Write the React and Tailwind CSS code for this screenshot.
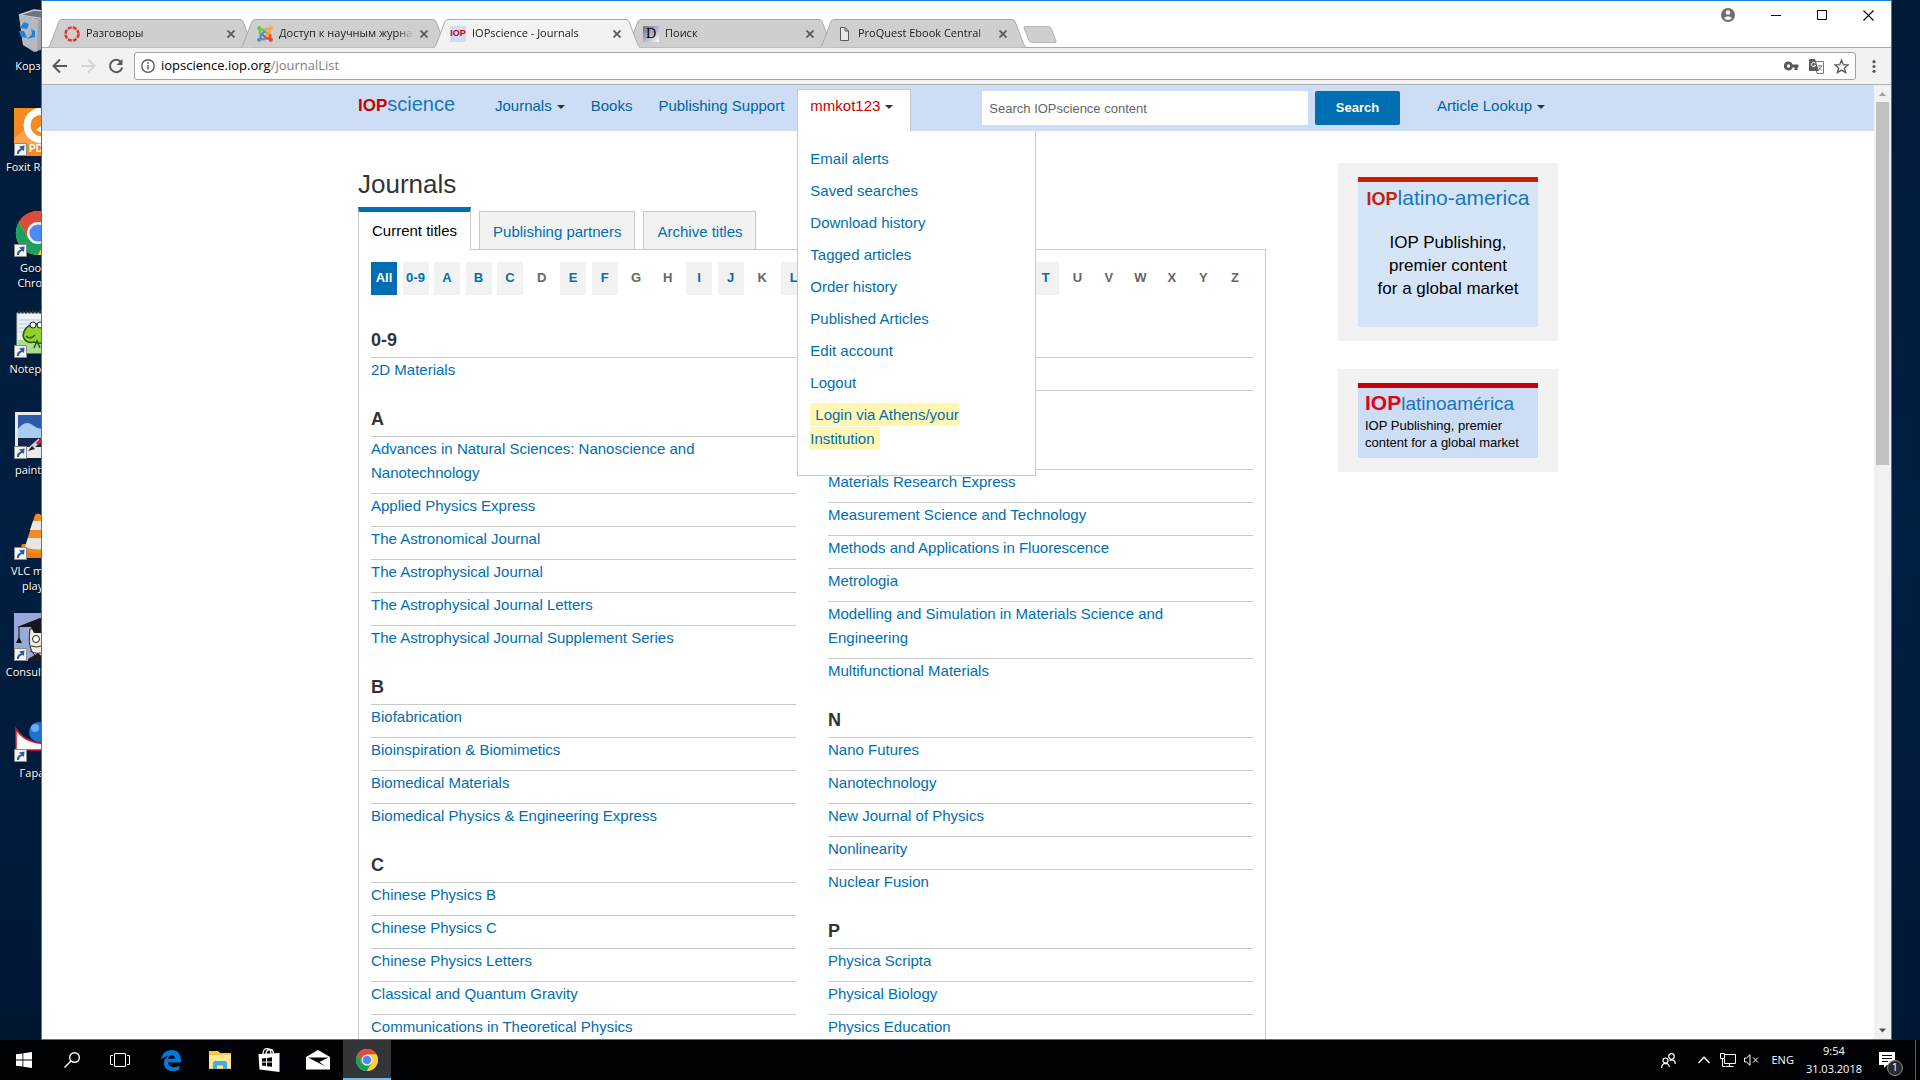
import React from 'react'

const desktopItems = [
  { label: 'Корзина', icon: 'bin' },
  { label: 'Foxit Reader', icon: 'foxit', shortcut: true },
  { label: 'Google Chrome', icon: 'chrome', shortcut: true },
  { label: 'Notepad++', icon: 'notepad', shortcut: true },
  { label: 'paint.net', icon: 'paint', shortcut: true },
  { label: 'VLC media player', icon: 'vlc', shortcut: true },
  { label: 'Consultant...', icon: 'consultant', shortcut: true },
  { label: 'Гарант', icon: 'garant', shortcut: true },
]

const browserTabs = [
  { title: 'Разговоры', icon: 'ring' },
  { title: 'Доступ к научным журналам', icon: 'joomla' },
  { title: 'IOPscience - Journals', icon: 'iop', active: true },
  { title: 'Поиск', icon: 'letter' },
  { title: 'ProQuest Ebook Central', icon: 'page' },
]

const accountLinks = [
  'Email alerts',
  'Saved searches',
  'Download history',
  'Tagged articles',
  'Order history',
  'Published Articles',
  'Edit account',
  'Logout',
]

const letters = ['All', '0-9', ...'ABCDEFGHIJKLMNOPQRSTUVWXYZ']
const emptyLetters = 'DGHKOUVWXYZ'

const leftColumn = [
  { letter: '0-9', titles: ['2D Materials'] },
  {
    letter: 'A',
    titles: [
      'Advances in Natural Sciences: Nanoscience and Nanotechnology',
      'Applied Physics Express',
      'The Astronomical Journal',
      'The Astrophysical Journal',
      'The Astrophysical Journal Letters',
      'The Astrophysical Journal Supplement Series',
    ],
  },
  {
    letter: 'B',
    titles: [
      'Biofabrication',
      'Bioinspiration & Biomimetics',
      'Biomedical Materials',
      'Biomedical Physics & Engineering Express',
    ],
  },
  {
    letter: 'C',
    titles: [
      'Chinese Physics B',
      'Chinese Physics C',
      'Chinese Physics Letters',
      'Classical and Quantum Gravity',
      'Communications in Theoretical Physics',
    ],
  },
]

const rightColumn = [
  { letter: 'L', titles: ['Laser Physics', 'Laser Physics Letters'] },
  {
    letter: 'M',
    titles: [
      'Materials Research Express',
      'Measurement Science and Technology',
      'Methods and Applications in Fluorescence',
      'Metrologia',
      'Modelling and Simulation in Materials Science and Engineering',
      'Multifunctional Materials',
    ],
  },
  {
    letter: 'N',
    titles: ['Nano Futures', 'Nanotechnology', 'New Journal of Physics', 'Nonlinearity', 'Nuclear Fusion'],
  },
  { letter: 'P', titles: ['Physica Scripta', 'Physical Biology', 'Physics Education'] },
]

const ChromeLogo = ({ className }) => (
  <svg viewBox="0 0 48 48" className={className}>
    <circle cx="24" cy="24" r="22" fill="#fbc62f" />
    <path d="M24 13 H43 A22 22 0 0 0 4.9 13 L15 30 Z" fill="#dd4b3e" />
    <path d="M4.9 13 A22 22 0 0 0 24 46 L33.5 29.5 L24 34 L14.5 29.5 Z" fill="#1aa15f" />
    <path d="M43 13 H24 L33.5 29.5 L24 46 A22 22 0 0 0 43 13 Z" fill="#fccd3c" />
    <circle cx="24" cy="24" r="11" fill="#f4f4f4" />
    <circle cx="24" cy="24" r="8.6" fill="#4c8bf5" />
  </svg>
)

const DesktopIcon = ({ name }) => {
  if (name === 'bin')
    return (
      <svg viewBox="0 0 48 48" className="size-12">
        <path d="M5 8 L20 3 L46 6 L30 12 Z" fill="#6d757c" stroke="#c9ced2" strokeWidth="1.5" />
        <path d="M5 8 L24 12 L46 6 L41 38 L20 45 L9 38 Z" fill="#9da4ab" />
        <path d="M5 8 L24 12 L23 45 L9 38 Z" fill="#b4bac0" />
        <path d="M6 21 l4-6 5 2-2 5z M5 24 l5 0 3 7-6-1z M13 32 l5-5-1-5 4 2 0 6z" fill="#1c82dc" />
      </svg>
    )
  if (name === 'foxit')
    return (
      <svg viewBox="0 0 48 48" className="size-12">
        <path d="M0 0 H48 V48 H0 Z" fill="#f58a1f" />
        <path d="M0 31 L14 18 L26 30 V36 H0 Z" fill="#f9a34c" />
        <path d="M32 5 A13 14 0 1 0 32 30" fill="none" stroke="#fff" strokeWidth="7" />
        <path d="M22 22 l6-5 v8z" fill="#fff" />
        <text x="15" y="44" fill="#fff" fontSize="10" fontWeight="700" fontFamily="Liberation Sans, sans-serif">PDF</text>
      </svg>
    )
  if (name === 'chrome') return <ChromeLogo className="size-12" />
  if (name === 'notepad')
    return (
      <svg viewBox="0 0 48 48" className="size-12">
        <path d="M3 3 H46 V43 H3 Z" fill="#eef3f8" stroke="#b8c2cc" />
        <path d="M4 2 H46" stroke="#333" strokeWidth="3" strokeDasharray="2 1.5" />
        <path d="M5 10 H45 M5 14 H45 M5 18 H45 M5 22 H45" stroke="#a7c8e6" />
        <path d="M4 30 H45 V43 H4 Z" fill="#a8e08c" />
        <path d="M9 26 Q10 15 22 14 Q38 14 36 28 Q30 36 20 32 Q11 34 9 26 Z" fill="#8ed22f" stroke="#2f5511" strokeWidth="1.5" />
        <circle cx="19" cy="15" r="3" fill="#fff" stroke="#222" />
        <circle cx="26" cy="15" r="3" fill="#fff" stroke="#222" />
        <path d="M12 26 q4 4 9-1 M20 38 l3-7 3 7" fill="none" stroke="#2f5511" strokeWidth="1.5" />
      </svg>
    )
  if (name === 'paint')
    return (
      <svg viewBox="0 0 48 48" className="size-12">
        <path d="M1 1 H47 V47 H1 Z" fill="#e9e9e9" />
        <path d="M4 4 H44 V36 H4 Z" fill="#2a5caa" />
        <path d="M4 18 Q12 8 20 15 T44 12 V27 H4 Z" fill="#a9cdf0" />
        <path d="M4 27 H44 V36 H4 Z" fill="#12294f" />
        <path d="M17 37 L26 29" stroke="#cfd3d8" strokeWidth="4" />
        <path d="M23 33 L40 16" stroke="#cf2027" strokeWidth="3" />
        <path d="M14 40 l4-5 3 3z" fill="#222" />
      </svg>
    )
  if (name === 'vlc')
    return (
      <svg viewBox="0 0 48 48" className="size-12">
        <path d="M8 32 H42 L47 46 H4 Z" fill="#ef7d0f" />
        <path d="M21 3 Q24 0 27 3 L38 38 Q24 45 10 38 Z" fill="#f58a1f" />
        <path d="M19 9 H29 L32 18 H16 Z" fill="#e6e6e6" />
        <path d="M14 26 H34 L37 35 Q24 40 11 35 Z" fill="#e6e6e6" />
      </svg>
    )
  if (name === 'consultant')
    return (
      <svg viewBox="0 0 48 48" className="size-12">
        <path d="M0 0 H48 V48 H0 Z" fill="#98a8d8" />
        <path d="M16 16 Q12 44 30 46 H48 V12 Z" fill="#f2ead9" stroke="#222" />
        <path d="M3 14 L26 5 L48 10 V20 L20 20 L17 14 Z" fill="#16161c" />
        <path d="M5 14 V26" stroke="#111" />
        <path d="M5 24 l3 6 h-6z" fill="#111" />
        <circle cx="22" cy="26" r="3.5" fill="#fff" stroke="#222" />
        <path d="M14 46 L24 40 L34 48 H14 Z" fill="#1c1c22" />
        <path d="M17 33 q6 2 10 0 M16 38 q6 4 14 1" fill="none" stroke="#333" />
      </svg>
    )
  return (
    <svg viewBox="0 0 48 48" className="size-12">
      <path d="M2 15 Q14 34 46 28 V36 H2 Z" fill="#fff" stroke="#d4122c" strokeWidth="1.5" />
      <circle cx="25" cy="18" r="10" fill="#1c74d0" />
      <circle cx="21" cy="14" r="4" fill="#69aef0" />
    </svg>
  )
}

const ShortcutArrow = () => (
  <svg viewBox="0 0 13 13" className="absolute bottom-0 left-0 size-[13px]">
    <path d="M0.5 0.5 H12.5 V12.5 H0.5 Z" fill="#f4f4f4" stroke="#8b8b8b" />
    <path d="M3 11 C3 7 5 6 7 5.5 L5 3.5 L10.5 2.5 L10 8 L8.3 6.8 C6 8 5 9 5 11 Z" fill="#2c5aa0" />
  </svg>
)

const Desktop = () => (
  <aside className="w-[41px] shrink-0 overflow-hidden pt-[7px]">
    <ul className="w-[76px]">
      {desktopItems.map((item) => (
        <li key={item.label} className="flex h-[101px] flex-col items-center">
          <div className="relative size-12">
            <DesktopIcon name={item.icon} />
            {item.shortcut && <ShortcutArrow />}
          </div>
          <span className="mt-[3px] text-center text-[11px] leading-[15px] text-white [text-shadow:1px_1px_2px_#000]">
            {item.label}
          </span>
        </li>
      ))}
    </ul>
  </aside>
)

const Favicon = ({ name }) => {
  if (name === 'ring')
    return (
      <svg viewBox="0 0 16 16" className="size-4 shrink-0">
        <circle cx="8" cy="8" r="6.5" fill="none" stroke="#e2392c" strokeWidth="2.6" strokeDasharray="3.9 1.2" />
      </svg>
    )
  if (name === 'joomla')
    return (
      <svg viewBox="0 0 16 16" className="size-4 shrink-0">
        {['#7ac143', '#f9a541', '#f44321', '#5091cd'].map((color, i) => (
          <g key={color} transform={`rotate(${i * 90} 8 8)`}>
            <circle cx="2.2" cy="2.2" r="2.1" fill={color} />
            <path d="M3.2 8 Q2 5 4 3.8 Q6 2.8 7.5 4.5 L10.5 7.5" fill="none" stroke={color} strokeWidth="2.4" />
          </g>
        ))}
      </svg>
    )
  if (name === 'iop')
    return (
      <span className="flex size-4 shrink-0 items-center justify-center bg-[#ccddf5] font-['Liberation_Sans',sans-serif] text-[9px] font-bold text-[#c00]">
        IOP
      </span>
    )
  if (name === 'letter')
    return (
      <span className="flex size-4 shrink-0 items-center justify-center bg-gradient-to-br from-[#6a6a8a] to-white font-['Liberation_Serif',serif] text-[14px] leading-4 text-black">
        D
      </span>
    )
  return (
    <svg viewBox="0 0 16 16" className="size-4 shrink-0" fill="#e8e8e8" stroke="#5a5a5a">
      <path d="M4.5 1.5 H9 L12.5 5 V14.5 H4.5 Z M9 1.5 V5 H12.5" />
    </svg>
  )
}

const BrowserTab = ({ tab }) => (
  <div className={`relative -mr-[13px] h-[29px] w-[206px] ${tab.active ? 'z-10' : ''}`}>
    <svg viewBox="0 0 206 29" className="absolute inset-0 size-full" preserveAspectRatio="none">
      <path
        d="M0 28.5 L2 26 L11 2.5 Q12 0.5 14 0.5 H192 Q194 0.5 195 2.5 L204 26 L206 28.5"
        fill={tab.active ? '#f2f2f2' : '#cfcfcf'}
        stroke="#a9a9a9"
      />
      {tab.active && <path d="M1 28.5 H205" stroke="#f2f2f2" strokeWidth="1.5" />}
    </svg>
    <div className="relative flex h-full items-center gap-[6px] pr-[19px] pl-4 text-[11px] text-[#222]">
      <Favicon name={tab.icon} />
      <span className="min-w-0 flex-1 overflow-hidden whitespace-nowrap [mask-image:linear-gradient(to_right,#000_88%,transparent)]">
        {tab.title}
      </span>
      <button aria-label={`Close ${tab.title}`} className="shrink-0">
        <svg viewBox="0 0 8 8" className="size-2" stroke="#5a5a5a" strokeWidth="1.8">
          <path d="M0.5 0.5 L7.5 7.5 M7.5 0.5 L0.5 7.5" />
        </svg>
      </button>
    </div>
  </div>
)

const TitleBar = () => (
  <div className="flex h-[47px] items-start justify-between border-b border-[#a9a9a9] bg-white">
    <div className="flex pt-[18px] pl-[6px]">
      {browserTabs.map((tab) => (
        <BrowserTab key={tab.title} tab={tab} />
      ))}
      <button aria-label="New tab" className="mt-[7px] ml-[10px] h-[17px]">
        <svg viewBox="0 0 34 17" className="h-[17px] w-[34px]">
          <path d="M2 0.5 H25 Q27 0.5 28 2 L33 15 Q33.5 16.5 32 16.5 H9 Q7 16.5 6 14.5 L1 2 Q0.5 0.5 2 0.5 Z" fill="#cfcfcf" stroke="#b5b5b5" />
        </svg>
      </button>
    </div>
    <div className="flex items-center gap-9 pt-[7px] pr-[17px]">
      <button aria-label="Profile">
        <svg viewBox="0 0 14 14" className="size-[14px]">
          <circle cx="7" cy="7" r="7" fill="#6e6e6e" />
          <circle cx="7" cy="4.5" r="2.2" fill="#fff" />
          <path d="M3 10 Q7 6.5 11 10 Q7 14 3 10 Z" fill="#fff" />
        </svg>
      </button>
      <button aria-label="Minimize">
        <svg viewBox="0 0 10 10" className="size-[10px]" stroke="#000">
          <path d="M0 5.5 H10" />
        </svg>
      </button>
      <button aria-label="Maximize">
        <svg viewBox="0 0 10 10" className="size-[10px]" fill="none" stroke="#000">
          <path d="M0.5 0.5 H9.5 V9.5 H0.5 Z" />
        </svg>
      </button>
      <button aria-label="Close window">
        <svg viewBox="0 0 11 11" className="size-[11px]" stroke="#000" strokeWidth="1.1">
          <path d="M0.5 0.5 L10.5 10.5 M10.5 0.5 L0.5 10.5" />
        </svg>
      </button>
    </div>
  </div>
)

const Toolbar = () => (
  <div className="flex h-[37px] items-center border-b border-[#b0b0b0] bg-[#f2f2f2] pl-[10px]">
    <div className="flex items-center gap-3">
      <button aria-label="Back">
        <svg viewBox="0 0 16 16" className="size-4" fill="none" stroke="#5a5a5a" strokeWidth="2">
          <path d="M15 8 H2 M8 1.5 L1.5 8 L8 14.5" />
        </svg>
      </button>
      <button aria-label="Forward">
        <svg viewBox="0 0 16 16" className="size-4" fill="none" stroke="#d3d3d3" strokeWidth="2">
          <path d="M1 8 H14 M8 1.5 L14.5 8 L8 14.5" />
        </svg>
      </button>
      <button aria-label="Reload">
        <svg viewBox="0 0 16 16" className="size-4" fill="none" stroke="#5a5a5a" strokeWidth="2">
          <path d="M13 4 A6.2 6.2 0 1 0 14.2 9.5" />
          <path d="M14.5 1 V7 H8.5 Z" fill="#5a5a5a" stroke="none" />
        </svg>
      </button>
    </div>
    <div className="ml-[10px] flex h-7 flex-1 items-center rounded-[3px] border border-[#a3a3a3] bg-white px-[6px]">
      <svg viewBox="0 0 14 14" className="mr-[6px] size-[14px]" fill="none" stroke="#5a5a5a" strokeWidth="1.4">
        <circle cx="7" cy="7" r="6.2" />
        <path d="M7 6 V10.5 M7 3.3 V4.9" />
      </svg>
      <span className="flex-1 text-[13px] text-black">
        iopscience.iop.org<span className="text-[#808080]">/journalList</span>
      </span>
      <div className="flex items-center gap-[10px]">
        <svg viewBox="0 0 15 10" className="h-[10px] w-[15px]" fill="#5a5a5a">
          <path d="M4.5 0.5 A4.5 4.5 0 1 0 8.6 6.5 H10.5 V9 H13.5 V6.5 H14.5 V3.5 H8.6 A4.5 4.5 0 0 0 4.5 0.5 Z M4.5 3.3 A1.7 1.7 0 1 1 4.5 6.7 A1.7 1.7 0 1 1 4.5 3.3 Z" fillRule="evenodd" />
        </svg>
        <svg viewBox="0 0 15 15" className="size-[15px]">
          <path d="M5 2.5 H14.5 V14.5 H8 Z" fill="#fff" stroke="#777" />
          <path d="M0 1 Q0 0 1 0 H6 L10 12 H1 Q0 12 0 11 Z" fill="#5a5a5a" />
          <path d="M6.5 4.3 A2.2 2.2 0 1 0 6.7 6.3 H4.8" fill="none" stroke="#fff" />
          <path d="M9 7 H13.5 M11.2 6 V7 M12.5 7 Q11.5 10 9.5 11 M10 8.5 L12.5 11.5" fill="none" stroke="#777" />
        </svg>
        <svg viewBox="0 0 15 15" className="size-[15px]" fill="none" stroke="#5a5a5a" strokeWidth="1.4">
          <path d="M7.5 1.3 L9.3 5.7 L14 6 L10.4 9 L11.6 13.6 L7.5 11.1 L3.4 13.6 L4.6 9 L1 6 L5.7 5.7 Z" />
        </svg>
      </div>
    </div>
    <button aria-label="Menu" className="flex w-[35px] justify-center">
      <svg viewBox="0 0 4 13" className="h-[13px] w-1" fill="#5a5a5a">
        <circle cx="2" cy="1.7" r="1.6" />
        <circle cx="2" cy="6.5" r="1.6" />
        <circle cx="2" cy="11.3" r="1.6" />
      </svg>
    </button>
  </div>
)

const Caret = () => (
  <svg viewBox="0 0 8 4" className="ml-[5px] inline-block h-1 w-2 align-middle" fill="#333">
    <path d="M0 0 H8 L4 4 Z" />
  </svg>
)

const AccountMenu = () => (
  <div className="relative h-[42px] w-[114px] border-x border-t border-[#c9c9c9] bg-white px-3 pt-1">
    <button className="whitespace-nowrap text-[#c00]">
      mmkot123
      <Caret />
    </button>
    <ul className="absolute top-[41px] -left-px z-20 flex w-[239px] flex-col gap-2 border-x border-b border-[#c9c9c9] bg-white px-3 pt-4 pb-6">
      {accountLinks.map((label) => (
        <li key={label}>
          <a href="#">{label}</a>
        </li>
      ))}
      <li>
        <a href="#" className="rounded-[2px] bg-[#fff7b2] px-[5px] py-[3px]">
          Login via Athens/your Institution
        </a>
      </li>
    </ul>
  </div>
)

const SiteHeader = () => (
  <header className="bg-[#ccddf5] text-[#006eb2]">
    <div className="mx-auto flex h-[46px] max-w-[1200px] items-start pt-1">
      <a href="#" className="w-[137px] pt-[3px] text-[20px] leading-6 text-[#1577bc]">
        <b className="text-[17px] text-[#c00]">IOP</b>science
      </a>
      <nav className="flex gap-[26px] pt-[5px] text-[#0063a5]">
        <a href="#">
          Journals
          <Caret />
        </a>
        <a href="#">Books</a>
        <a href="#">Publishing Support</a>
      </nav>
      <div className="ml-[13px]">
        <AccountMenu />
      </div>
      <form className="mt-[2px] ml-[71px] flex flex-1 gap-[7px]">
        <input
          type="text"
          aria-label="Search IOPscience content"
          placeholder="Search IOPscience content"
          className="h-[34px] min-w-0 flex-1 bg-white px-[7px] text-[13px] placeholder:text-[#666]"
        />
        <button type="button" className="h-[34px] w-[85px] rounded-[2px] bg-[#006eb2] text-[13px] font-bold text-white">
          Search
        </button>
      </form>
      <a href="#" className="mr-[13px] ml-[37px] pt-[5px] text-[#0063a5]">
        Article Lookup
        <Caret />
      </a>
    </div>
  </header>
)

const JournalGroup = ({ letter, titles }) => (
  <section>
    <h2 className="pt-[17px] pb-[5px] text-[18px] leading-6 font-bold text-[#333]">{letter}</h2>
    <ul>
      {titles.map((title) => (
        <li key={title} className="border-t border-[#c9c9c9] pr-3 pb-2">
          <a href="#">{title}</a>
        </li>
      ))}
    </ul>
  </section>
)

const LetterButton = ({ letter }) => {
  const empty = emptyLetters.includes(letter)
  let style = 'bg-[#f2f2f2] text-[#006eb2]'
  if (letter === 'All') style = 'bg-[#006eb2] text-white'
  if (empty) style = 'text-[#666]'
  return (
    <button disabled={empty} className={`h-[33px] w-[26px] pb-[2px] text-[13px] font-bold ${style}`}>
      {letter}
    </button>
  )
}

const JournalList = () => (
  <div className="w-[908px]">
    <h1 className="pt-[35px] pb-[5px] text-[26px] leading-9 text-[#333]">Journals</h1>
    <div className="flex items-end gap-2">
      <button className="-mb-px h-[43px] border-x border-t-[5px] border-x-[#c9c9c9] border-t-[#006eb2] bg-white px-[13px] text-black">
        Current titles
      </button>
      <button className="h-[38px] border-x border-t border-[#c9c9c9] bg-[#f2f2f2] px-[13px] pt-[2px]">
        Publishing partners
      </button>
      <button className="h-[38px] border-x border-t border-[#c9c9c9] bg-[#f2f2f2] px-[13px] pt-[2px]">
        Archive titles
      </button>
    </div>
    <div className="border border-[#c9c9c9] px-3 pt-3 pb-8">
      <div className="mb-4 flex justify-between pr-[5px]">
        {letters.map((letter) => (
          <LetterButton key={letter} letter={letter} />
        ))}
      </div>
      <div className="grid grid-cols-2 gap-8">
        <div>
          {leftColumn.map((group) => (
            <JournalGroup key={group.letter} {...group} />
          ))}
        </div>
        <div>
          {rightColumn.map((group) => (
            <JournalGroup key={group.letter} {...group} />
          ))}
        </div>
      </div>
    </div>
  </div>
)

const Promos = () => (
  <aside className="w-[220px] pt-8 text-black">
    <a href="#" className="block bg-[#f2f2f2] px-5 py-[14px]">
      <div className="h-[150px] border-t-[5px] border-[#cc1e00] bg-[#d6e4f7] text-center">
        <p className="pt-1 text-[21px] leading-6 whitespace-nowrap text-[#1577bc]">
          <b className="text-[18px] text-[#c81e0c]">IOP</b>latino-america
        </p>
        <p className="mt-5 text-[17px] leading-[23px]">
          IOP Publishing,
          <br />
          premier content
          <br />
          for a global market
        </p>
      </div>
    </a>
    <a href="#" className="mt-7 block bg-[#f2f2f2] px-5 py-[14px]">
      <div className="h-[75px] border-t-[5px] border-[#c4000f] bg-[#ccddf5] px-[7px]">
        <p className="pt-[3px] text-[19px] leading-6 whitespace-nowrap text-[#1577bc]">
          <b className="text-[21px] text-[#e2001a]">IOP</b>latinoamérica
        </p>
        <p className="pt-px text-[13px] leading-[17px] whitespace-nowrap">
          IOP Publishing, premier
          <br />
          content for a global market
        </p>
      </div>
    </a>
  </aside>
)

const Scrollbar = () => (
  <div className="flex w-[17px] shrink-0 flex-col items-center justify-between bg-[#f1f1f1]">
    <div className="flex flex-col items-center">
      <svg viewBox="0 0 17 17" className="size-[17px]" fill="#a3a3a3">
        <path d="M5 11 L8.5 7 L12 11 Z" />
      </svg>
      <div className="h-[363px] w-[13px] bg-[#c1c1c1]" />
    </div>
    <svg viewBox="0 0 17 17" className="size-[17px]" fill="#505050">
      <path d="M5 6.5 L8.5 10.5 L12 6.5 Z" />
    </svg>
  </div>
)

const BrowserWindow = () => (
  <div className="flex min-w-0 flex-1 flex-col border border-[#1883d7] bg-white">
    <TitleBar />
    <Toolbar />
    <div className="flex min-h-0 flex-1">
      <div className="min-w-0 flex-1 overflow-hidden font-['Liberation_Sans',Arial,sans-serif] text-[15px] leading-6 text-[#006eb2]">
        <SiteHeader />
        <main className="mx-auto flex max-w-[1200px] justify-between">
          <JournalList />
          <Promos />
        </main>
      </div>
      <Scrollbar />
    </div>
  </div>
)

const Taskbar = () => (
  <footer className="flex h-10 shrink-0 items-stretch justify-between bg-[#010206] text-white">
    <div className="flex gap-px">
      <div className="mr-[2px] flex">
        <button aria-label="Start" className="flex w-12 items-center justify-center">
          <svg viewBox="0 0 16 16" className="size-4" fill="#fff">
            <path d="M0 2.3 L6.5 1.4 V7.6 H0 Z M7.3 1.3 L16 0 V7.6 H7.3 Z M0 8.4 H6.5 V14.6 L0 13.7 Z M7.3 8.4 H16 V16 L7.3 14.7 Z" />
          </svg>
        </button>
        <button aria-label="Search" className="flex w-12 items-center justify-center">
          <svg viewBox="0 0 16 16" className="size-4" fill="none" stroke="#fff" strokeWidth="1.4">
            <circle cx="10.5" cy="5.5" r="4.8" />
            <path d="M7 9 L0.5 15.5" />
          </svg>
        </button>
        <button aria-label="Task view" className="flex w-12 items-center justify-center">
          <svg viewBox="0 0 20 14" className="h-[14px] w-5" fill="none" stroke="#fff">
            <path d="M4.5 0.5 H15.5 V13.5 H4.5 Z M3 2.5 H0.5 V11.5 H3 M17 2.5 H19.5 V11.5 H17" />
          </svg>
        </button>
      </div>
      <button aria-label="Edge" className="flex w-12 items-center justify-center">
        <svg viewBox="0 0 20 21" className="h-[21px] w-5" fill="#0078d7">
          <path d="M0 9.5 C1 3.5 5 0 10.5 0 C16.5 0 20 4 20 10 V12.5 H7 C7 15.5 9.5 17 12.5 17 C15 17 17 16.3 18.5 15.4 V19.5 C16.5 20.5 14.2 21 11.8 21 C6.3 21 2.8 17.8 2.8 13.2 C2.8 10 4.5 7.3 7.5 5.7 C4.5 5.9 1.8 7.5 0 9.5 Z M7.2 8.7 H13.7 C13.7 6.3 12.6 4.9 10.6 4.9 C8.8 4.9 7.5 6.4 7.2 8.7 Z" fillRule="evenodd" />
        </svg>
      </button>
      <button aria-label="File Explorer" className="flex w-12 items-center justify-center">
        <svg viewBox="0 0 22 18" className="h-[18px] w-[22px]">
          <path d="M0 0 H9 L11 2 H22 V18 H0 Z" fill="#f6c944" />
          <path d="M0 4 H22 V17 H0 Z" fill="#ffe694" />
          <path d="M4 18 V12 Q4 10 6 10 H16 Q18 10 18 12 V18 H14 V14.5 H8 V18 Z" fill="#3fb0e6" />
        </svg>
      </button>
      <button aria-label="Store" className="flex w-12 items-center justify-center">
        <svg viewBox="0 0 22 24" className="h-6 w-[22px]">
          <path d="M5 6 C5 2 7 0.7 9 0.7 C11 0.7 13 2 13 6 M8 6 C8 2.5 10 1.5 12 1.5 C14 1.5 15.5 3 15.5 6" fill="none" stroke="#fff" strokeWidth="1.3" />
          <path d="M0.5 6 L21.5 5 V24 L1.5 21.5 Z" fill="#fff" />
          <path d="M4 10.5 L8 10 V13.5 H4 Z M9 9.9 L14 9.3 V13.5 H9 Z M4 14.5 H8 V18 L4 17.5 Z M9 14.5 H14 V18.8 L9 18.2 Z" fill="#010206" />
        </svg>
      </button>
      <button aria-label="Mail" className="flex w-12 items-center justify-center">
        <svg viewBox="0 0 24 20" className="h-5 w-6">
          <path d="M0 7 L12 0 L24 7 V19.5 H0 Z" fill="#fff" />
          <path d="M2 7.5 H22.5 L13.5 12 L19.5 16.5 Z" fill="#010206" />
        </svg>
      </button>
      <button aria-label="Google Chrome" className="flex w-12 items-center justify-center border-b-2 border-[#76b9ed] bg-[#343539] pt-[2px]">
        <ChromeLogo className="size-6" />
      </button>
    </div>
    <div className="flex items-center">
      <svg viewBox="0 0 15 15" className="mr-[22px] size-[15px]" fill="none" stroke="#fff" strokeWidth="1.2">
        <circle cx="10.5" cy="3.5" r="2.8" />
        <circle cx="4.5" cy="7.5" r="2.5" />
        <path d="M0.6 15 Q0.8 10.5 4.5 10.3 Q8 10.5 8.3 14 M8.5 7.5 Q14 5.5 14.4 11" />
      </svg>
      <svg viewBox="0 0 12 8" className="mr-[10px] h-2 w-3" fill="none" stroke="#fff" strokeWidth="1.4">
        <path d="M0.5 7 L6 1.3 L11.5 7" />
      </svg>
      <svg viewBox="0 0 16 14" className="mr-2 h-[14px] w-4" fill="none" stroke="#fff">
        <path d="M5 1.5 H15.5 V10.5 H4.5 V6 M9.5 10.5 V13.5 M5.5 13.5 H13.5 M0.5 0.5 H4.5 V5.5 H0.5 Z M2.5 5.5 V13.5 H5" />
      </svg>
      <svg viewBox="0 0 15 12" className="mr-3 h-3 w-[15px]" fill="none" stroke="#fff">
        <path d="M0.5 4 H2.5 L6 0.7 V11.3 L2.5 8 H0.5 Z M9 3.5 L14 8.5 M14 3.5 L9 8.5" />
      </svg>
      <span className="text-[11px]">ENG</span>
      <div className="mx-3 text-center text-[11px] leading-[18px]">
        <div>9:54</div>
        <div>31.03.2018</div>
      </div>
      <div className="relative ml-[5px] size-[17px]">
        <svg viewBox="0 0 17 17" className="size-[17px]">
          <path d="M0 0 H16 V13 H8 L5 16 V13 H0 Z" fill="#fff" />
          <path d="M3 3.5 H13 M3 6.5 H13 M3 9.5 H9" stroke="#010206" />
        </svg>
        <span className="absolute top-2 left-2 flex size-4 items-center justify-center rounded-full border border-[#8a8a8a] bg-[#2b2b2b] text-[11px]">
          1
        </span>
      </div>
      <div className="ml-[19px] h-full w-[5px] border-l border-[#5a5a5f]" />
    </div>
  </footer>
)

const App = () => (
  <div className="flex h-screen flex-col overflow-hidden bg-gradient-to-b from-[#011a38] via-[#001f42] to-[#001733] font-['Open_Sans','Noto_Sans',sans-serif]">
    <div className="flex min-h-0 flex-1">
      <Desktop />
      <BrowserWindow />
      <div className="w-7 shrink-0" />
    </div>
    <Taskbar />
  </div>
)

export default App
